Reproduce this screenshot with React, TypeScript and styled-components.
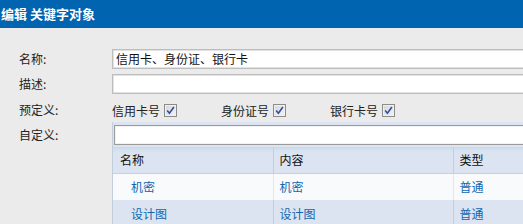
import styled, { createGlobalStyle } from 'styled-components';

const GlobalStyle = createGlobalStyle`
  html, body {
    margin: 0;
    padding: 0;
    overflow: hidden;
    background: #eaebea;
    font-family: "Noto Sans CJK SC", "DejaVu Sans", sans-serif;
    font-size: 12px;
    color: #222;
  }
`;

const Page = styled.div`
  width: 523px;
  height: 224px;
  overflow: hidden;
`;

const TitleBar = styled.div`
  height: 28px;
  line-height: 28px;
  padding-left: 1px;
  background: #0064b0;
  color: #ffffff;
  font-size: 13px;
  font-weight: bold;
  white-space: nowrap;
`;

const Form = styled.div`
  padding-top: 21px;
  display: flex;
  flex-direction: column;
`;

const Row = styled.div<{ gap?: number; height?: number; top?: boolean }>`
  display: flex;
  align-items: ${p => (p.top ? 'flex-start' : 'center')};
  height: ${p => (p.height ? `${p.height}px` : 'auto')};
  margin-bottom: ${p => p.gap ?? 0}px;
`;

const Label = styled.div<{ offset?: number }>`
  width: 93px;
  flex: none;
  padding-left: 19px;
  box-sizing: border-box;
  width: 112px;
  line-height: 20px;
  margin-top: ${p => p.offset ?? 0}px;
  white-space: nowrap;
`;

const TextField = styled.div<{ dark?: boolean }>`
  width: 440px;
  height: 20px;
  box-sizing: border-box;
  flex: none;
  background: #ffffff;
  border: 1px solid ${p => (p.dark ? '#9a9a9a' : '#bdbdbd')};
  box-shadow: inset 0 0 0 1px ${p => (p.dark ? '#f2f2f2' : '#e2e2e2')};
  padding-left: 3px;
  line-height: 18px;
  white-space: nowrap;
  color: #111;
`;

const Options = styled.div`
  display: flex;
  align-items: center;
`;

const Option = styled.div`
  width: 109px;
  display: flex;
  align-items: center;
  gap: 4px;
  white-space: nowrap;
`;

const Box = styled.span`
  display: inline-flex;
  align-items: center;
  justify-content: center;
  width: 13px;
  height: 13px;
  box-sizing: border-box;
  border: 1px solid #8c8c8c;
  background: linear-gradient(135deg, #d6d6d6, #f4f4f4);
  box-shadow: inset 0 0 0 1px #f0f0f0;
`;

const Panel = styled.div`
  width: 440px;
  flex: none;
  background: #dbe4f0;
  border-left: 1px solid #c3cedb;
  padding-top: 3px;
`;

const FieldWrap = styled.div`
  padding-left: 1px;
  margin-bottom: 2px;
`;

const Grid = styled.table`
  border-collapse: collapse;
  width: 100%;
  table-layout: fixed;
`;

const HeadCell = styled.th<{ w?: number; pad: number; first?: boolean }>`
  width: ${p => (p.w ? `${p.w}px` : 'auto')};
  height: 26px;
  padding: 0 0 0 ${p => p.pad}px;
  text-align: left;
  font-weight: normal;
  color: #111;
  background: linear-gradient(#c7d6ea 0px, #d6e1ef 3px, #dbe4f0 6px);
  border-bottom: 1px solid #c8d0d9;
  border-left: ${p => (p.first ? 'none' : '1px solid #c4cedb')};
  box-sizing: border-box;
`;

const BodyRow = styled.tr<{ alt?: boolean }>`
  background: ${p => (p.alt ? '#dbe4f0' : '#f8fafc')};
`;

const Cell = styled.td<{ pad: number; first?: boolean; alt?: boolean }>`
  height: 27px;
  padding: 0 0 0 ${p => p.pad}px;
  color: #1067b0;
  border-left: ${p => (p.first ? 'none' : `1px solid ${p.alt ? '#c4cedb' : '#e1e7ee'}`)};
  box-sizing: border-box;
  white-space: nowrap;
`;

const Check = () => (
  <Box>
    <svg width="9" height="9" viewBox="0 0 9 9">
      <path d="M1.2 4.6 L3.4 7.2 L7.9 1" fill="none" stroke="#2f4fa6" strokeWidth="1.6" />
    </svg>
  </Box>
);

const presets = ['信用卡号', '身份证号', '银行卡号'];

const rows = [
  { name: '机密', content: '机密', type: '普通' },
  { name: '设计图', content: '设计图', type: '普通' },
];

export default function App() {
  return (
    <Page>
      <GlobalStyle />
      <TitleBar>编辑 关键字对象</TitleBar>
      <Form>
        <Row gap={5} height={20}>
          <Label>名称:</Label>
          <TextField>信用卡、身份证、银行卡</TextField>
        </Row>
        <Row gap={4} height={20}>
          <Label>描述:</Label>
          <TextField />
        </Row>
        <Row height={24}>
          <Label>预定义:</Label>
          <Options>
            {presets.map(p => (
              <Option key={p}>
                {p}
                <Check />
              </Option>
            ))}
          </Options>
        </Row>
        <Row top>
          <Label offset={3}>自定义:</Label>
          <Panel>
            <FieldWrap>
              <TextField dark />
            </FieldWrap>
            <Grid>
              <thead>
                <tr>
                  <HeadCell w={160} pad={7} first>名称</HeadCell>
                  <HeadCell w={180} pad={6}>内容</HeadCell>
                  <HeadCell pad={6}>类型</HeadCell>
                </tr>
              </thead>
              <tbody>
                {rows.map((r, i) => (
                  <BodyRow key={r.name} alt={i % 2 === 1}>
                    <Cell pad={18} first>{r.name}</Cell>
                    <Cell pad={6} alt={i % 2 === 1}>{r.content}</Cell>
                    <Cell pad={6} alt={i % 2 === 1}>{r.type}</Cell>
                  </BodyRow>
                ))}
              </tbody>
            </Grid>
          </Panel>
        </Row>
      </Form>
    </Page>
  );
}
